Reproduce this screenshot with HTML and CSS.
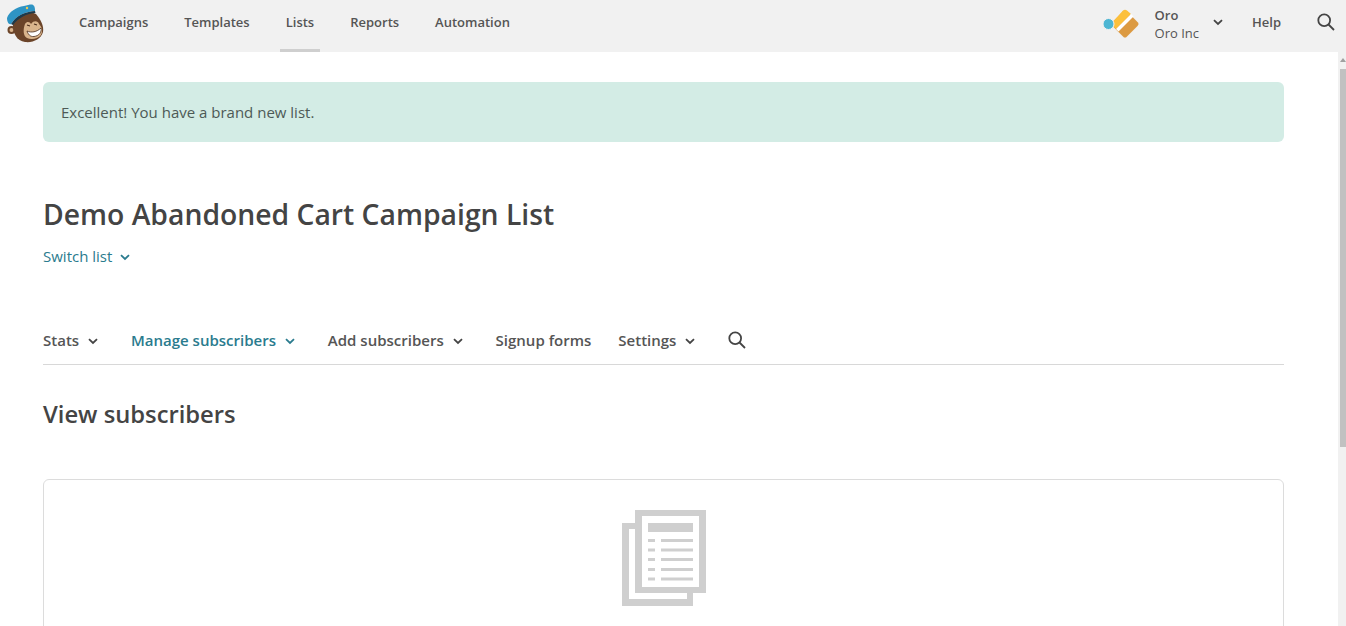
FILE: index.html
```html
<!DOCTYPE html>
<html lang="en">
<head>
    <meta charset="UTF-8">
    <title>Demo Abandoned Cart Campaign List</title>
    <link rel="stylesheet" href="styles.css">
</head>
<body>
    <header class="topbar">
        <svg class="logo" width="38" height="40" viewBox="6 4 38 40">
            <circle cx="11.500" cy="30" r="4" fill="#6b4429"/>
            <circle cx="11.500" cy="30" r="2" fill="#d9b48c"/>
            <path d="M13 22 C17 14 30 11 36 14 C41 20 44 26 43 32 C41 39 33 43 25 42 C17 41 12 33 13 22Z" fill="#6b4429"/>
            <path d="M25 24 C27 21 30 22 31 24 C34 20 38 21 39 24 C42 27 43 31 41 35 C38 39 31 40 27 38 C23 36 23 29 25 24Z" fill="#d9b48c"/>
            <path d="M27 31 C31 33 37 32 41 28 C42 32 39 36 34 36.500 C30 37 28 34 27 31Z" fill="#fff" stroke="#4a2d1c" stroke-width="0.800"/>
            <path d="M27 25 l3 1 M34 24 l3 1" stroke="#4a2d1c" stroke-width="1.200" fill="none"/>
            <path d="M7 18 C9 12 16 7 24 6 C28 5 32 4 33 5 C35 6 35 9 35 11 C27 11 16 16 11 24 C9 25 7 22 7 18Z" fill="#2e94c4"/>
            <path d="M11 24 C16 16 27 11 35 11 L35.500 13 C27 13 18 18 13 25Z" fill="#1d3a4b"/>
            <circle cx="27" cy="8" r="1.200" fill="#f2c94c"/>
        </svg>
        <nav class="main-nav">
            <a href="#">Campaigns</a>
            <a href="#">Templates</a>
            <a href="#" class="active">Lists</a>
            <a href="#">Reports</a>
            <a href="#">Automation</a>
        </nav>
        <div class="account">
            <svg class="oro-logo" width="38" height="32" viewBox="1102 8 38 32">
                <rect x="1113.750" y="13.750" width="20.500" height="20.500" rx="2.500" transform="rotate(45 1124 24)" fill="#dc9a42"/>
                <path d="M1110 24 L1122 10.500 Q1124 9 1126 10.500 L1130 14 L1115 29Z" fill="#fcc03c"/>
                <path d="M1115 29 L1130 14 L1132.500 16.500 L1117.500 31.500Z" fill="#fff"/>
                <circle cx="1107.500" cy="24" r="5.500" fill="#4db6d3" stroke="#f1f1f1" stroke-width="1"/>
            </svg>
            <div class="account-names">
                <span class="account-user">Oro</span>
                <span class="account-org">Oro Inc</span>
            </div>
            <svg class="chev chev-dark" width="10" height="7" viewBox="0 0 10 7"><path d="M1 1.200 L5 5 L9 1.200"/></svg>
            <a href="#" class="help">Help</a>
            <svg class="search" width="18" height="18" viewBox="0 0 18 18"><circle cx="7.200" cy="7.200" r="5.900"/><path d="M11.500 11.500 L17 17"/></svg>
        </div>
    </header>

    <div class="page">
        <main class="content">
            <div class="alert">Excellent! You have a brand new list.</div>

            <h1>Demo Abandoned Cart Campaign List</h1>
            <a href="#" class="switch-list">Switch list
                <svg class="chev chev-teal" width="10" height="7" viewBox="0 0 10 7"><path d="M1 1.200 L5 5 L9 1.200"/></svg>
            </a>

            <nav class="tabs">
                <a href="#">Stats <svg class="chev" width="10" height="7" viewBox="0 0 10 7"><path d="M1 1.200 L5 5 L9 1.200"/></svg></a>
                <a href="#" class="current">Manage subscribers <svg class="chev chev-teal" width="10" height="7" viewBox="0 0 10 7"><path d="M1 1.200 L5 5 L9 1.200"/></svg></a>
                <a href="#">Add subscribers <svg class="chev" width="10" height="7" viewBox="0 0 10 7"><path d="M1 1.200 L5 5 L9 1.200"/></svg></a>
                <a href="#">Signup forms</a>
                <a href="#">Settings <svg class="chev" width="10" height="7" viewBox="0 0 10 7"><path d="M1 1.200 L5 5 L9 1.200"/></svg></a>
                <svg class="search" width="18" height="18" viewBox="0 0 18 18"><circle cx="7.200" cy="7.200" r="5.900"/><path d="M11.500 11.500 L17 17"/></svg>
            </nav>

            <h2>View subscribers</h2>

            <section class="empty-card">
                <svg width="84" height="96" viewBox="0 0 84 96" fill="#cfcfcf">
                    <path fill-rule="evenodd" d="M0 13H13V19H7V89H65V83H71V96H0Z"/>
                    <path fill-rule="evenodd" d="M13 0H84V83H13ZM20 6V77H77V6Z"/>
                    <rect x="26" y="13" width="45" height="9"/>
                    <rect x="26" y="29" width="7" height="3"/><rect x="39" y="29" width="32" height="3"/>
                    <rect x="26" y="38.500" width="7" height="3"/><rect x="39" y="38.500" width="32" height="3"/>
                    <rect x="26" y="48" width="7" height="3"/><rect x="39" y="48" width="32" height="3"/>
                    <rect x="26" y="58" width="7" height="3"/><rect x="39" y="58" width="32" height="3"/>
                    <rect x="26" y="67.500" width="7" height="3"/><rect x="39" y="67.500" width="32" height="3"/>
                </svg>
            </section>
        </main>
        <div class="scrollbar">
            <div class="scroll-arrow"></div>
            <div class="scroll-thumb"></div>
        </div>
    </div>
</body>
</html>
```

FILE: styles.css
```css
html, body {
    margin: 0;
    height: 626px;
    overflow: hidden;
}
body {
    font-family: "Open Sans", Arial, sans-serif;
    color: #444;
    background-color: #fff;
}
a {
    color: inherit;
    text-decoration: none;
}
.topbar {
    display: flex;
    align-items: center;
    height: 52px;
    padding-left: 6px;
    background-color: #f1f1f1;
    box-sizing: border-box;
}
.logo {
    flex: none;
    margin-top: -4px;
}
.main-nav {
    display: flex;
    align-self: stretch;
    gap: 24px;
    margin-left: 29px;
    font-size: 13px;
    font-weight: 600;
    color: #555;
}
.main-nav a {
    display: flex;
    align-items: center;
    padding: 1px 6px 0;
    margin-top: -6px;
    border-bottom: 3px solid transparent;
}
.main-nav a.active {
    border-bottom-color: #cfcfcf;
}
.account {
    display: flex;
    align-items: center;
    margin-left: auto;
    padding-right: 11px;
    padding-bottom: 8px;
    font-size: 13px;
    color: #555;
}
.oro-logo {
    margin: 4px 14px 0 0;
}
.account-names {
    display: flex;
    flex-direction: column;
    margin-top: 4px;
    line-height: 18px;
}
.account-user {
    font-weight: 600;
}
.chev {
    fill: none;
    stroke: #444;
    stroke-width: 1.8;
}
.chev-dark {
    margin-left: 14px;
}
.chev-teal {
    stroke: #2a7b8e;
}
.help {
    margin-left: 29px;
    font-weight: 600;
}
.search {
    fill: none;
    stroke: #444;
    stroke-width: 1.8;
}
.account .search {
    margin-left: 36px;
}
.page {
    display: flex;
    height: 574px;
    overflow: hidden;
}
.content {
    flex: 1;
    padding: 30px 54px 0 43px;
    min-width: 0;
}
.alert {
    height: 60px;
    line-height: 60px;
    padding-left: 18px;
    border-radius: 6px;
    background-color: #d3ece5;
    font-size: 15px;
    color: #4d5a56;
}
h1 {
    margin: 52px 0 0;
    font-size: 28.3px;
    line-height: 40px;
    font-weight: 600;
}
.switch-list {
    display: inline-block;
    margin-top: 12px;
    font-size: 15px;
    line-height: 20px;
    color: #2a7b8e;
}
.switch-list .chev {
    margin-left: 4px;
    vertical-align: 1px;
}
.tabs {
    display: flex;
    align-items: center;
    gap: 27px;
    height: 48px;
    margin-top: 49px;
    border-bottom: 1px solid #d8d8d8;
    font-size: 15px;
    font-weight: 600;
    color: #555;
}
.tabs a .chev {
    margin: 0 6px 0 5px;
    vertical-align: 1px;
}
.tabs a.current {
    color: #2a7b8e;
}
h2 {
    margin: 31px 0 0;
    font-size: 23.75px;
    line-height: 36px;
    font-weight: 600;
}
.empty-card {
    display: flex;
    justify-content: center;
    height: 300px;
    margin-top: 47px;
    padding-top: 30px;
    box-sizing: border-box;
    border: 1px solid #dcdcdc;
    border-radius: 6px;
}
.scrollbar {
    flex: none;
    width: 8px;
    background-color: #f1f1f1;
}
.scroll-arrow {
    width: 0;
    height: 0;
    margin: 6px 0 0 2px;
    border-left: 3px solid transparent;
    border-right: 3px solid transparent;
    border-bottom: 4px solid #a0a0a0;
}
.scroll-thumb {
    width: 6px;
    height: 378px;
    margin: 7px 0 0 2px;
    background-color: #c1c1c1;
}
```
